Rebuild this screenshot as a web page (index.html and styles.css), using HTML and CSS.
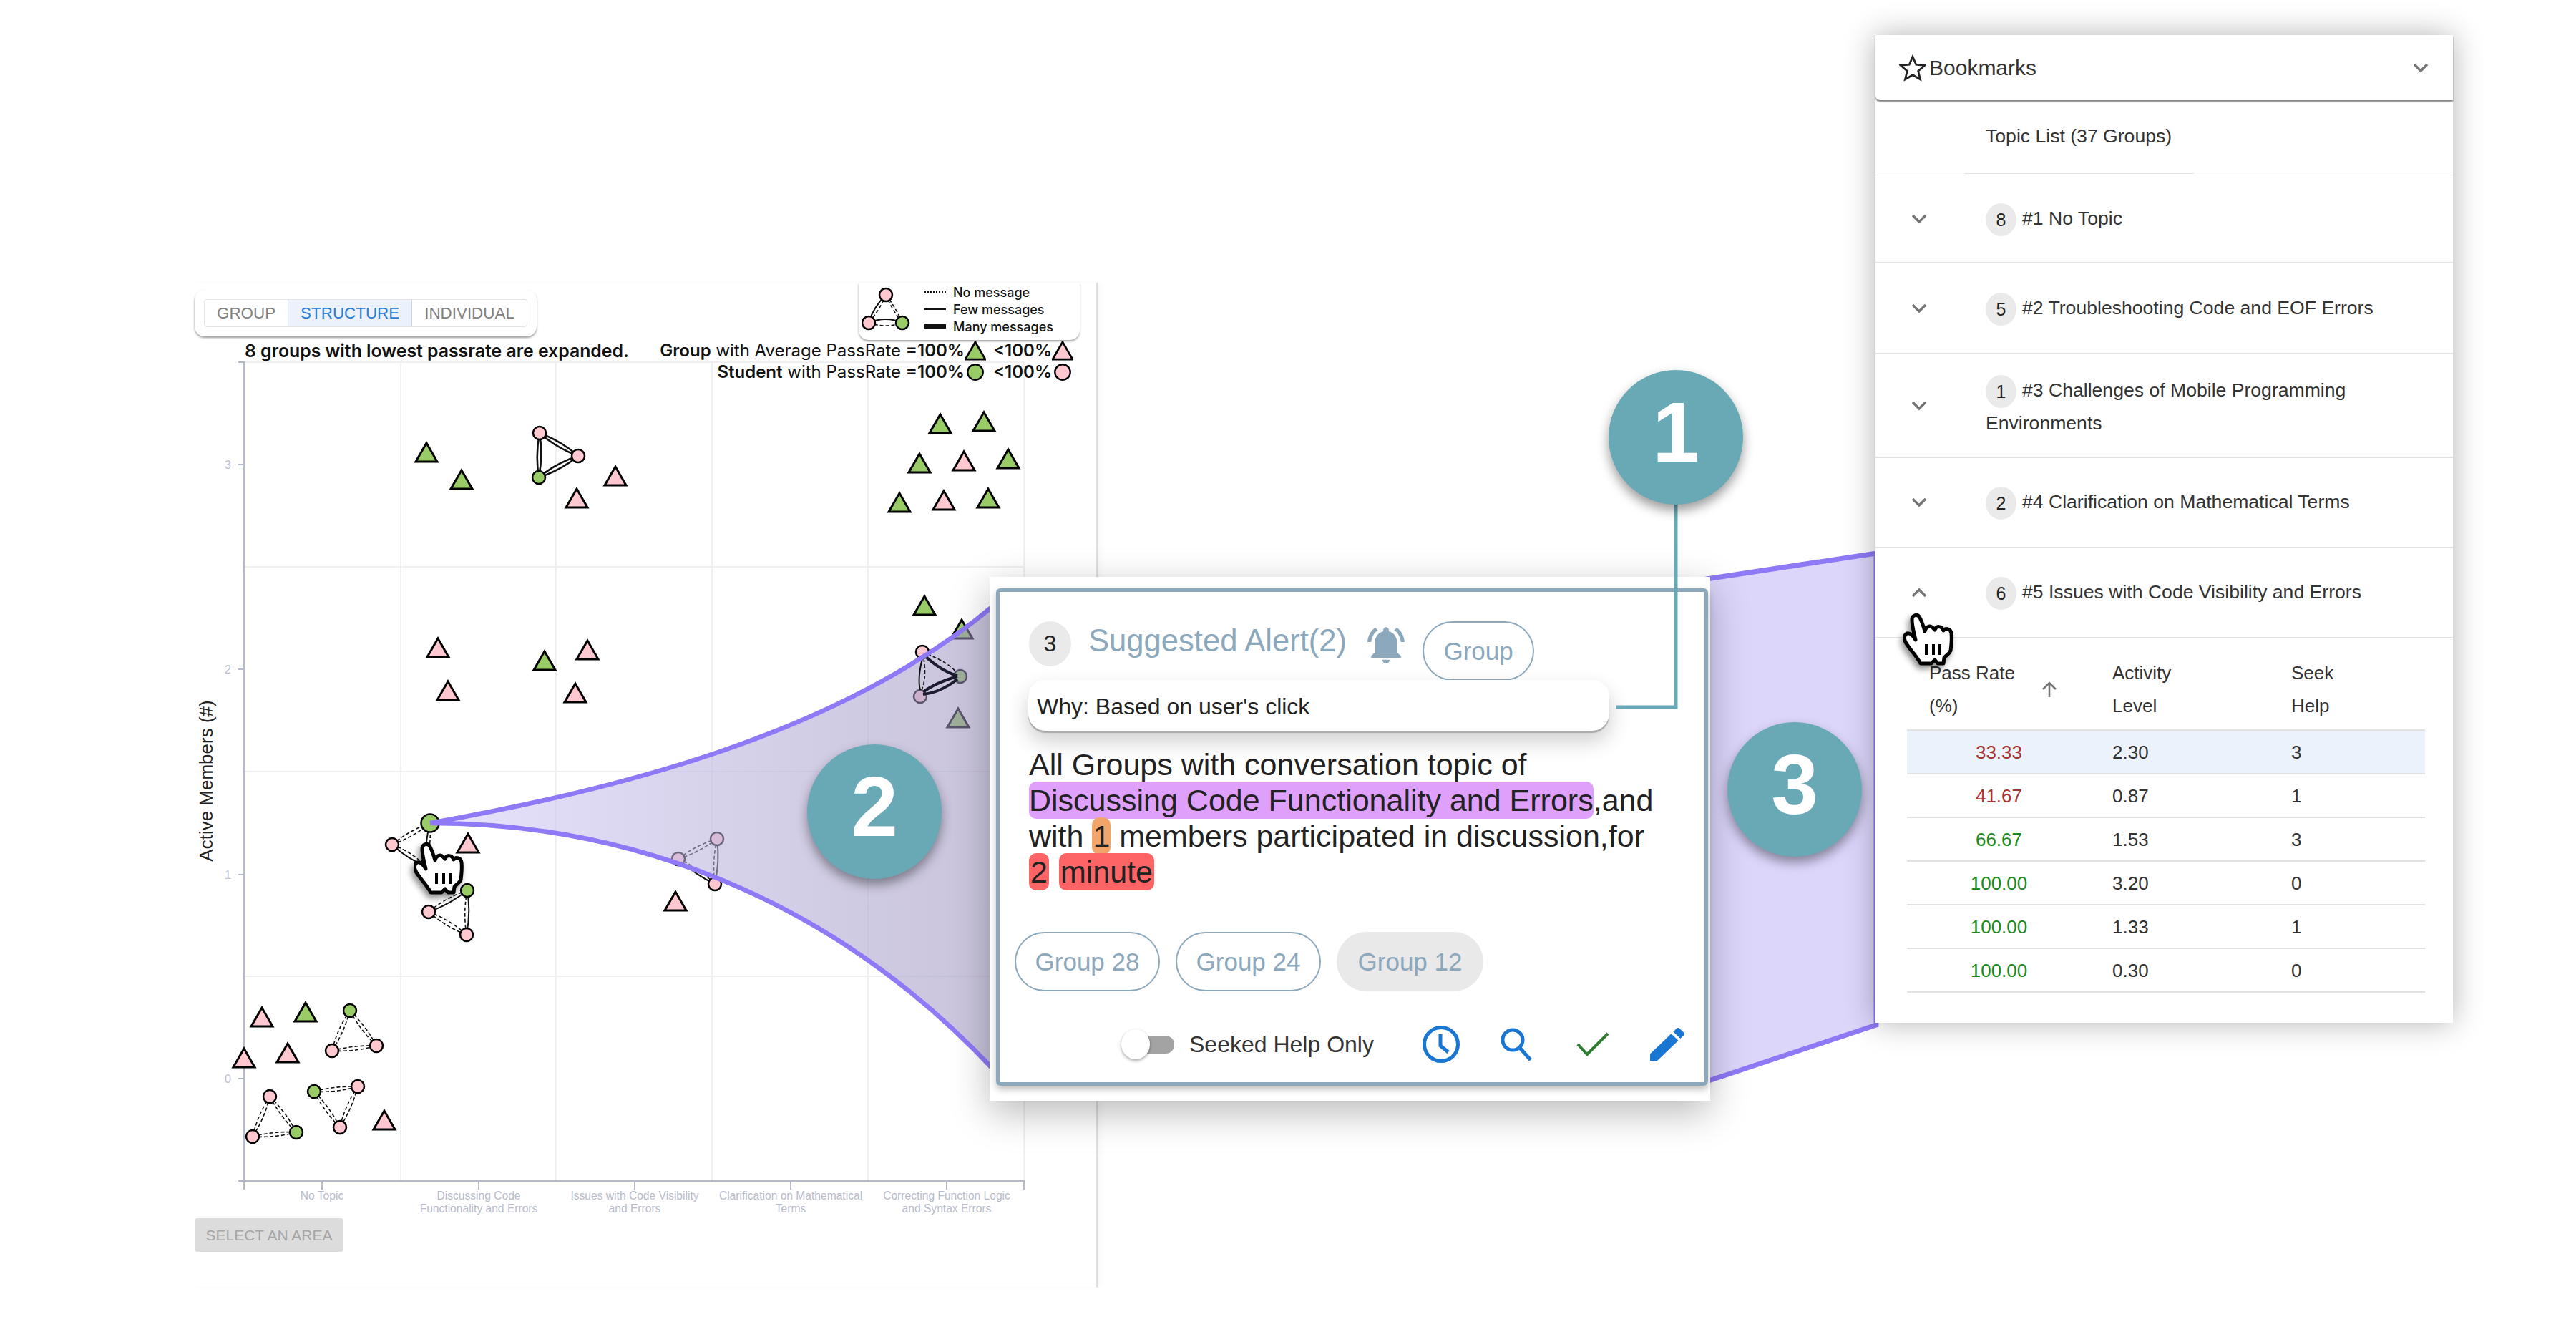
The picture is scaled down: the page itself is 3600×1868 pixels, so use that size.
FILE: index.html
```html
<!DOCTYPE html>
<html lang="en">
  <head>
    <meta charset="utf-8" />
    <title>Suggested alert walkthrough</title>
    <link rel="stylesheet" href="styles.css">
  </head>
  <body>
    <div class="stage">

      <!-- shapes used all over the chart -->
      <svg class="defs" width="0" height="0">
        <defs>
          <polygon id="tg" class="green tri" points="0,-13 15,13 -15,13" />
          <polygon id="tp" class="pink tri" points="0,-13 15,13 -15,13" />
          <circle id="ng" class="green" r="9" />
          <circle id="np" class="pink" r="9" />
          <symbol id="hand" viewBox="0 0 70 74">
            <path class="hand-body" d="M24 70 C20 62 12 54 4 42 C0 36 1 30 5 28 C9 27 13 30 17 37 C15 28 12 18 12 9 C12 2 20 0 23 6 C26 12 28 18 30 25 C31 19 37 16 41 20 L44 23 C46 17 53 17 56 24 C59 20 66 21 67 28 C68 36 67 44 66 52 C64 57 59 59 57 62 L56 70 L48 70 L44 65 L39 70 Z" />
            <path class="hand-lines" d="M32 43V58M42 43V58M51 43V58" />
          </symbol>
        </defs>
      </svg>

      <!-- the scatter chart, in page coordinates -->
      <svg class="canvas" viewBox="0 0 3600 1868">
        <g class="grid">
          <path d="M560 506V1650M777 506V1650M995 506V1650M1213 506V1650M1431 506V1650" />
          <path d="M341 506H1431M341 792H1431M341 1078H1431M341 1364H1431" />
        </g>
        <g class="axis">
          <path d="M333 506H341V1650M333 649H341M333 935H341M333 1222H341M333 1507H341" />
          <path d="M333 1650H1431V1662M341 1650V1662M450 1650V1662M669 1650V1662M887 1650V1662M1105 1650V1662M1323 1650V1662" />
        </g>
        <g class="tick-y">
          <text x="323" y="655">3</text>
          <text x="323" y="941">2</text>
          <text x="323" y="1228">1</text>
          <text x="323" y="1513">0</text>
        </g>
        <g class="tick-x">
          <text x="450" y="1676">No Topic</text>
          <text x="669" y="1676">Discussing Code</text>
          <text x="669" y="1694">Functionality and Errors</text>
          <text x="887" y="1676">Issues with Code Visibility</text>
          <text x="887" y="1694">and Errors</text>
          <text x="1105" y="1676">Clarification on Mathematical</text>
          <text x="1105" y="1694">Terms</text>
          <text x="1323" y="1676">Correcting Function Logic</text>
          <text x="1323" y="1694">and Syntax Errors</text>
        </g>
        <text class="y-title" transform="translate(297 1091) rotate(-90)">Active Members (#)</text>

        <g class="edges">
          <!-- group at top middle -->
          <path class="solid bold" d="M754 605q30 11 54 32M754 605q24 21 54 32M808 637q-24 20 -55 30M808 637q-31 10 -55 30M754 605q5 31 -1 62M754 605q-6 31 -1 62" />
          <!-- clicked group -->
          <path class="dash" d="M601 1150q-24 20 -53 30M601 1150q-29 10 -53 30M548 1180q27 10 47 30M601 1150q2 30 -6 60" />
          <path class="solid" d="M548 1180q21 20 47 30M601 1150q-8 30 -6 60" />
          <path class="solid" d="M653 1244q-25 20 -54 30M653 1244q5 31 -1 62" />
          <path class="dash" d="M653 1244q-30 10 -54 30M599 1274q24 21 53 32M599 1274q30 11 53 32M653 1244q-6 31 -1 62" />
          <!-- group cut by the fan edge -->
          <path class="dash" d="M1002 1172q-25 19 -54 28M1002 1172q-30 9 -54 28M948 1200q29 13 51 35M1002 1172q-7 32 -3 63" />
          <path class="solid" d="M948 1200q23 22 51 35M1002 1172q4 32 -3 63" />
          <!-- no topic groups -->
          <path class="dash" d="M489 1412q-8 30 -25 56M489 1412q-18 26 -25 56M464 1468q32 2 62 -7M464 1468q31 -8 62 -7M489 1412q23 22 37 49M489 1412q15 28 37 49" />
          <path class="dash" d="M377 1532q-7 30 -24 56M377 1532q-17 26 -24 56M353 1588q31 2 61 -6M353 1588q30 -8 61 -6M377 1532q23 22 37 50M377 1532q15 28 37 50" />
          <path class="dash" d="M439 1525q31 2 61 -7M439 1525q30 -8 61 -7M500 1518q-8 31 -25 57M500 1518q-18 27 -25 57M439 1525q22 22 36 50M439 1525q14 28 36 50" />
        </g>

        <g class="nodes">
          <use href="#tg" x="596" y="632" /><use href="#tg" x="645" y="670" />
          <use href="#tp" x="860" y="665" /><use href="#tp" x="806" y="696" />
          <use href="#tg" x="1314" y="592" /><use href="#tg" x="1375" y="589" />
          <use href="#tg" x="1285" y="647" /><use href="#tp" x="1347" y="644" />
          <use href="#tg" x="1409" y="641" /><use href="#tg" x="1257" y="702" />
          <use href="#tp" x="1319" y="699" /><use href="#tg" x="1381" y="696" />
          <use href="#tp" x="612" y="905" /><use href="#tp" x="626" y="965" />
          <use href="#tg" x="761" y="923" /><use href="#tp" x="821" y="908" />
          <use href="#tp" x="804" y="968" /><use href="#tg" x="1292" y="846" />
          <use href="#tg" x="1344" y="879" /><use href="#tg" x="1339" y="1003" />
          <use href="#tp" x="654" y="1178" /><use href="#tp" x="944" y="1259" />
          <use href="#tp" x="366" y="1421" /><use href="#tg" x="427" y="1414" />
          <use href="#tp" x="341" y="1478" /><use href="#tp" x="402" y="1471" />
          <use href="#tp" x="537" y="1565" />

          <use href="#np" x="754" y="605" /><use href="#np" x="808" y="637" /><use href="#ng" x="753" y="667" />
          <use href="#np" x="1289" y="911" /><use href="#ng" x="1342" y="945" /><use href="#np" x="1286" y="973" />
          <use href="#np" x="548" y="1180" /><use href="#np" x="595" y="1210" />
          <circle class="green" cx="601" cy="1150" r="12.5" />
          <use href="#ng" x="653" y="1244" /><use href="#np" x="599" y="1274" /><use href="#np" x="652" y="1306" />
          <use href="#np" x="1002" y="1172" /><use href="#np" x="948" y="1200" /><use href="#np" x="999" y="1235" />
          <use href="#ng" x="489" y="1412" /><use href="#np" x="464" y="1468" /><use href="#np" x="526" y="1461" />
          <use href="#np" x="377" y="1532" /><use href="#np" x="353" y="1588" /><use href="#ng" x="414" y="1582" />
          <use href="#ng" x="439" y="1525" /><use href="#np" x="500" y="1518" /><use href="#np" x="475" y="1575" />
        </g>
      </svg>

      <section class="chart-panel">
        <div class="chart-top">
          <div class="tabs-card">
            <div class="tabs">
              <span class="tab">GROUP</span>
              <span class="tab tab-active">STRUCTURE</span>
              <span class="tab">INDIVIDUAL</span>
            </div>
          </div>
          <div class="legend">
            <svg class="legend-graph" viewBox="1205 400 70 70">
              <g class="edges">
                <path class="solid" d="M1238 416q-18 18 -24 39M1214 455q24 -10 47 0" />
                <path class="dash" d="M1238 416q-8 20 -24 39M1238 416q8 20 23 39M1238 416q14 18 23 39M1214 455q24 8 47 0" />
              </g>
              <circle class="pink" cx="1238" cy="416" r="9" />
              <circle class="pink" cx="1214" cy="455" r="9" />
              <circle class="green" cx="1261" cy="455" r="9" />
            </svg>
            <ul class="legend-list">
              <li><i class="sample sample-none"></i>No message</li>
              <li><i class="sample sample-few"></i>Few messages</li>
              <li><i class="sample sample-many"></i>Many messages</li>
            </ul>
          </div>
        </div>
        <div class="captions">
          <p class="caption-left">8 groups with lowest passrate are expanded.</p>
          <div class="caption-right">
            <p><b>Group</b> with Average PassRate <b>=100%</b><svg class="key" viewBox="-16 -15 32 30"><use href="#tg" /></svg><b class="key-gap">&lt;100%</b><svg class="key" viewBox="-16 -15 32 30"><use href="#tp" /></svg></p>
            <p><b>Student</b> with PassRate <b>=100%</b><svg class="key" viewBox="-16 -15 32 30"><circle class="green" r="11.5" /></svg><b class="key-gap">&lt;100%</b><svg class="key" viewBox="-16 -15 32 30"><circle class="pink" r="11.5" /></svg></p>
          </div>
        </div>
        <button class="select-btn">SELECT AN AREA</button>
      </section>

      <!-- the two fans joining the views -->
      <svg class="canvas" viewBox="0 0 3600 1868">
        <defs>
          <linearGradient id="fanFill" x1="0" x2="1" y1="0" y2="0">
            <stop offset="0" stop-color="#d8d0fa" stop-opacity="0.6" />
            <stop offset="1" stop-color="#9d94c0" stop-opacity="0.55" />
          </linearGradient>
        </defs>
        <path class="fan" d="M601 1150C850 1105 1170 1030 1390 845V1496C1150 1240 860 1150 601 1150Z" />
        <!-- this group stays dark under the fan -->
        <g class="edges">
          <path class="heavy" d="M1292 916q24 22 46 28M1338 949q-25 19 -48 21M1338 945q-31 9 -48 22" />
          <path class="solid" d="M1289 920q-7 28 -3 44" />
          <path class="dash" d="M1296 914q30 12 40 25M1291 920q4 28 -3 44" />
        </g>
        <path class="fan-edge" d="M601 1150C850 1105 1170 1030 1390 845M601 1150C860 1150 1150 1240 1390 1496" />
        <path class="fan-right" d="M2385 809L2622 773V1432L2385 1511Z" />
      </svg>

      <section class="alert-popup">
        <div class="alert-box">
          <div class="alert-head">
            <span class="count">3</span>
            <h2 class="alert-title">Suggested Alert(2)</h2>
            <svg class="bell" viewBox="2 2 20 20"><path d="M7.58 4.08 6.15 2.65C3.75 4.48 2.17 7.3 2.03 10.5h2c.15-2.65 1.51-4.97 3.55-6.42zm12.39 6.42h2c-.15-3.2-1.73-6.02-4.12-7.85l-1.42 1.43c2.02 1.45 3.39 3.77 3.54 6.42zM18 11c0-3.07-1.64-5.64-4.5-6.32V4c0-.83-.67-1.5-1.5-1.5s-1.5.67-1.5 1.5v.68C7.63 5.36 6 7.92 6 11v5l-2 2v1h16v-1l-2-2v-5zm-6 11c.14 0 .27-.01.4-.04.65-.14 1.18-.58 1.44-1.18.1-.24.15-.5.15-.78h-4c.01 1.1.9 2 2.01 2z" /></svg>
            <span class="chip chip-small">Group</span>
          </div>
          <div class="why">Why: Based on user's click</div>
          <p class="alert-text">All Groups with conversation topic of <mark class="hl-topic">Discussing Code Functionality and Errors</mark>,and with <mark class="hl-count">1</mark> members participated in discussion,for <mark class="hl-time">2</mark> <mark class="hl-time">minute</mark></p>
          <div class="chips">
            <span class="chip">Group 28</span>
            <span class="chip">Group 24</span>
            <span class="chip chip-on">Group 12</span>
          </div>
          <div class="alert-foot">
            <span class="toggle"><i class="knob"></i></span>
            <span class="toggle-label">Seeked Help Only</span>
            <svg class="ico ico-clock" viewBox="0 0 52 52"><circle cx="26" cy="26" r="23.5" /><path d="M25 12V28L36 37" /></svg>
            <svg class="ico ico-search" viewBox="0 0 44 46"><circle cx="17" cy="17" r="14" /><path d="M27 28L42 45" /></svg>
            <svg class="ico ico-check" viewBox="0 0 46 34"><path d="M2 17L15 31L44 2" /></svg>
            <svg class="ico ico-pen" viewBox="3 3 18 18" preserveAspectRatio="none"><path d="M3 17.25V21h3.75L17.81 9.94l-3.75-3.75L3 17.25zM20.71 7.04c.39-.39.39-1.02 0-1.41l-2.34-2.34c-.39-.39-1.02-.39-1.41 0l-1.83 1.83 3.75 3.75 1.83-1.83z" /></svg>
          </div>
        </div>
      </section>

      <section class="bookmarks">
        <header class="bm-head">
          <svg class="star" viewBox="0 0 36 36"><path d="M18 3L22.5 13.5L34 14.5L25.3 22L28 33L18 27.2L8 33L10.7 22L2 14.5L13.5 13.5Z" /></svg>
          <span class="bm-title">Bookmarks</span>
          <svg class="chev chev-head" viewBox="0 0 22 14"><path d="M2 2L11 11L20 2" /></svg>
        </header>
        <div class="topic-head"><span>Topic List (37 Groups)</span></div>
        <div class="topic-list">
          <div class="topic-row">
            <svg class="chev" viewBox="0 0 22 14"><path d="M2 2L11 11L20 2" /></svg>
            <div class="topic-text"><span class="count count-sm">8</span>#1 No Topic</div>
          </div>
          <div class="topic-row">
            <svg class="chev" viewBox="0 0 22 14"><path d="M2 2L11 11L20 2" /></svg>
            <div class="topic-text"><span class="count count-sm">5</span>#2 Troubleshooting Code and EOF Errors</div>
          </div>
          <div class="topic-row">
            <svg class="chev" viewBox="0 0 22 14"><path d="M2 2L11 11L20 2" /></svg>
            <div class="topic-text"><span class="count count-sm">1</span>#3 Challenges of Mobile Programming Environments</div>
          </div>
          <div class="topic-row">
            <svg class="chev" viewBox="0 0 22 14"><path d="M2 2L11 11L20 2" /></svg>
            <div class="topic-text"><span class="count count-sm">2</span>#4 Clarification on Mathematical Terms</div>
          </div>
          <div class="topic-row">
            <svg class="chev" viewBox="0 0 22 14"><path d="M2 12L11 3L20 12" /></svg>
            <div class="topic-text"><span class="count count-sm">6</span>#5 Issues with Code Visibility and Errors</div>
          </div>
        </div>
        <table class="rates">
          <thead>
            <tr>
              <th>
                <div class="sort-head">
                  <span>Pass Rate<br>(%)</span>
                  <svg class="sort-arrow" viewBox="0 0 24 24"><path d="M12 23V3M3 12L12 3L21 12" /></svg>
                </div>
              </th>
              <th>Activity<br>Level</th>
              <th>Seek<br>Help</th>
            </tr>
          </thead>
          <tbody>
            <tr class="row-on"><td class="low">33.33</td><td>2.30</td><td>3</td></tr>
            <tr><td class="low">41.67</td><td>0.87</td><td>1</td></tr>
            <tr><td class="high">66.67</td><td>1.53</td><td>3</td></tr>
            <tr><td class="high">100.00</td><td>3.20</td><td>0</td></tr>
            <tr><td class="high">100.00</td><td>1.33</td><td>1</td></tr>
            <tr><td class="high">100.00</td><td>0.30</td><td>0</td></tr>
          </tbody>
        </table>
      </section>

      <!-- step markers and cursors sit over everything -->
      <svg class="canvas" viewBox="0 0 3600 1868">
        <path class="connector" d="M2342 600V988H2258" />
      </svg>
      <div class="step step-1">1</div>
      <div class="step step-2">2</div>
      <div class="step step-3">3</div>
      <svg class="cursor cursor-chart"><use href="#hand" /></svg>
      <svg class="cursor cursor-list"><use href="#hand" /></svg>
    </div>
  </body>
</html>
```

FILE: styles.css
```css
* {
  box-sizing: border-box;
}

body {
  margin: 0;
  background: #fff;
  font-family: "Liberation Sans", Arial, sans-serif;
}

p,
h2,
ul {
  margin: 0;
  padding: 0;
}

.stage {
  position: relative;
  width: 3600px;
  height: 1868px;
  overflow: hidden;
}

.defs {
  position: absolute;
}

.canvas {
  position: absolute;
  left: 0;
  top: 0;
  width: 3600px;
  height: 1868px;
  pointer-events: none;
}

/* chart marks */
.green {
  fill: #99cc66;
  stroke: #000;
  stroke-width: 2.5;
}

.pink {
  fill: #ffc8d0;
  stroke: #000;
  stroke-width: 2.5;
}

.tri {
  stroke-width: 3;
}

.grid path {
  fill: none;
  stroke: #f0f0f2;
  stroke-width: 2;
}

.axis path {
  fill: none;
  stroke: #b4b9cc;
  stroke-width: 2;
}

.tick-y text {
  font-size: 16px;
  fill: #bcc1d2;
  text-anchor: end;
}

.tick-x text {
  font-size: 15.6px;
  fill: #b8bccb;
  text-anchor: middle;
}

.y-title {
  font-size: 26px;
  fill: #222;
  text-anchor: middle;
}

.edges path {
  fill: none;
  stroke: #111;
}

.edges .solid {
  stroke-width: 2;
}

.edges .bold {
  stroke-width: 2.6;
}

.edges .dash {
  stroke-width: 1.6;
  stroke-dasharray: 5 3;
}

.edges .heavy {
  stroke-width: 4;
  stroke: #1c1c30;
}

/* left view */
.chart-panel {
  position: absolute;
  left: 272px;
  top: 395px;
  width: 1262px;
  height: 1403px;
  display: flex;
  flex-direction: column;
  border-right: 2px solid #dedede;
  box-shadow: 4px 0 8px rgba(0, 0, 0, 0.03);
}

.chart-top {
  display: flex;
  justify-content: space-between;
  align-items: flex-start;
  padding-right: 23px;
  height: 80px;
}

.tabs-card {
  margin-top: 10px;
  padding: 13px;
  background: #fff;
  border-radius: 14px;
  box-shadow: 0 2px 3px rgba(0, 0, 0, 0.4);
}

.tabs {
  display: flex;
  border: 1px solid #e4e4e4;
  border-radius: 4px;
  height: 39px;
}

.tab {
  display: flex;
  align-items: center;
  padding: 0 17px;
  font-size: 22.4px;
  color: #808080;
}

.tab-active {
  background: #ebf2fb;
  color: #2a7bd6;
  border-left: 1px solid #c8d4e4;
  border-right: 1px solid #c8d4e4;
}

.legend {
  display: flex;
  gap: 17px;
  width: 309px;
  height: 80px;
  padding: 1px 0 0 5px;
  background: #fff;
  border-radius: 0 0 14px 14px;
  box-shadow: 0 2px 3px rgba(0, 0, 0, 0.35);
}

.legend-graph {
  width: 70px;
  height: 70px;
  flex: none;
}

.legend-list {
  list-style: none;
  font-family: Inter, sans-serif;
  font-size: 18px;
  font-weight: 500;
  color: #111;
}

.legend-list li {
  display: flex;
  align-items: center;
  height: 24px;
}

.sample {
  width: 30px;
  margin-right: 10px;
  border-top: 2px solid #111;
}

.sample-none {
  border-top-style: dotted;
}

.sample-many {
  border-top-width: 6px;
}

.captions {
  display: flex;
  justify-content: space-between;
  padding: 0 32px 0 70px;
  font-family: Inter, sans-serif;
  font-size: 24px;
  line-height: 30px;
  color: #111;
  position: relative;
}

.caption-left {
  font-size: 24.8px;
  font-weight: 600;
}

.caption-right p {
  display: flex;
  justify-content: flex-end;
  align-items: center;
  white-space: pre;
}

.caption-right b {
  font-weight: 600;
}

.key {
  width: 30px;
  height: 28px;
}

.key-gap {
  margin-left: 10px;
}

.select-btn {
  margin-top: auto;
  margin-bottom: 49px;
  width: 208px;
  height: 47px;
  border: 0;
  border-radius: 4px;
  background: #dcdcdc;
  color: #a6a6a6;
  font-family: inherit;
  font-size: 21px;
  position: relative;
}

/* fans */
.fan {
  fill: url(#fanFill);
}

.fan-edge {
  fill: none;
  stroke: #8f79f7;
  stroke-width: 6.5;
}

.fan-right {
  fill: #dcd6fb;
  stroke: #8f79f7;
  stroke-width: 7;
}

/* alert popup */
.alert-popup {
  position: absolute;
  left: 1383px;
  top: 806px;
  width: 1007px;
  height: 732px;
  padding: 16px 3px 21px 9px;
  background: #fff;
  box-shadow: 0 16px 50px rgba(0, 0, 0, 0.28);
}

.alert-box {
  height: 100%;
  padding: 41px 0 0 41px;
  border: 5px solid #8ca8bc;
  border-radius: 6px;
  box-shadow: 0 5px 10px rgba(0, 0, 0, 0.25);
}

.alert-head {
  display: flex;
  align-items: flex-start;
}

.count {
  display: flex;
  flex: none;
  justify-content: center;
  align-items: center;
  width: 59px;
  height: 63px;
  border-radius: 50%;
  background: #eaeaea;
  color: #222;
  font-size: 32px;
}

.alert-title {
  margin: 4px 0 0 24px;
  font-size: 43.6px;
  font-weight: 400;
  line-height: 47px;
  color: #8ca8bc;
}

.bell {
  flex: none;
  width: 54px;
  height: 52px;
  margin: 7px 24px 0 28px;
  fill: #8ca8bc;
}

.chip {
  display: flex;
  flex: none;
  justify-content: center;
  align-items: center;
  width: 203px;
  height: 83px;
  border: 2px solid #8ca8bc;
  border-radius: 42px;
  color: #8ca8bc;
  font-size: 35px;
}

.chip-small {
  width: 156px;
}

.chip-on {
  width: 205px;
  border-color: #e9e9e9;
  background: #e9e9e9;
}

.why {
  width: 812px;
  height: 71px;
  margin: -1px 0 0 -1px;
  padding-left: 12px;
  position: relative;
  line-height: 75px;
  font-size: 32px;
  color: #222;
  background: #fff;
  border-radius: 24px;
  box-shadow: 0 3px 1px #aaa, 0 14px 30px rgba(0, 0, 0, 0.2);
}

.alert-text {
  width: 880px;
  margin-top: 22px;
  font-size: 43px;
  line-height: 50px;
  color: #222;
}

mark {
  padding: 2px 0;
  border-radius: 10px;
  color: inherit;
  white-space: nowrap;
}

.hl-topic {
  background: #dea0fb;
}

.hl-count {
  padding: 2px 1px;
  background: #f2a56a;
}

.hl-time {
  padding: 2px 2px;
  margin-right: 2px;
  background: #fd6466;
}

.chips {
  display: flex;
  gap: 22px;
  margin: 59px 0 0 -20px;
}

.alert-foot {
  display: flex;
  align-items: center;
  margin: 53px 0 0 129px;
  height: 42px;
}

.toggle {
  position: relative;
  display: block;
  flex: none;
  width: 66px;
  height: 25px;
  margin-left: 8px;
  border-radius: 12px;
  background: #a3a3a3;
}

.knob {
  position: absolute;
  left: -8px;
  top: -9px;
  width: 40px;
  height: 42px;
  border-radius: 50%;
  background: #fff;
  box-shadow: 0 2px 4px rgba(0, 0, 0, 0.35);
}

.toggle-label {
  flex: none;
  margin: 0 68px 0 21px;
  width: 258px;
  font-size: 32px;
  white-space: nowrap;
  color: #333;
}

.ico {
  flex: none;
  fill: none;
  stroke: #1976d2;
}

.ico-clock {
  width: 52px;
  height: 52px;
  stroke-width: 5;
}

.ico-search {
  width: 44px;
  height: 46px;
  margin-left: 57px;
  stroke-width: 5;
}

.ico-check {
  width: 46px;
  height: 34px;
  margin-left: 62px;
  stroke: #2e7d32;
  stroke-width: 4;
}

.ico-pen {
  width: 48px;
  height: 46px;
  margin-left: 57px;
  stroke: none;
  fill: #1976d2;
}

/* bookmarks panel */
.bookmarks {
  position: absolute;
  left: 2620px;
  top: 49px;
  width: 808px;
  height: 1380px;
  background: #fff;
  border-left: 1px solid #888;
  box-shadow: 0 0 40px rgba(0, 0, 0, 0.3);
  color: #333;
  font-size: 26.6px;
}

.bm-head {
  display: flex;
  align-items: center;
  height: 91px;
  padding: 0 34px 0 33px;
  border-radius: 0 0 0 6px;
  box-shadow: 0 2px 2px rgba(0, 0, 0, 0.5);
  position: relative;
}

.star {
  width: 38px;
  height: 38px;
  margin-right: 4px;
  fill: none;
  stroke: #222;
  stroke-width: 2.6;
}

.bm-title {
  flex: 1;
  font-size: 30px;
}

.chev {
  width: 22px;
  height: 14px;
  margin-left: 50px;
  flex: none;
  fill: none;
  stroke: #757575;
  stroke-width: 3.4;
}

.chev-head {
  margin: 0;
}

.topic-head {
  height: 105px;
  padding-left: 154px;
  border-bottom: 1px solid #eee;
}

.topic-head span {
  display: block;
  width: 321px;
  height: 103px;
  margin-left: -30px;
  padding: 35px 0 0 30px;
  border-bottom: 1px solid #e4e4e4;
}

.topic-list {
  display: grid;
  grid-template-rows: 123px 127px 145px 126px 125px;
}

.topic-row {
  display: flex;
  align-items: center;
  border-bottom: 2px solid #e2e2e2;
}

.topic-row:last-child {
  border-bottom-width: 1px;
}

.topic-text {
  width: 640px;
  margin-left: 82px;
  padding-top: 2px;
  line-height: 42px;
}

.count-sm {
  display: inline-flex;
  vertical-align: middle;
  width: 43px;
  height: 46px;
  margin-right: 8px;
  font-size: 25px;
}

.rates {
  width: 724px;
  margin-left: 44px;
  border-collapse: collapse;
  table-layout: fixed;
  font-size: 26px;
}

.rates th {
  padding: 26px 0 10px 16px;
  font-weight: 400;
  text-align: left;
  line-height: 46px;
  vertical-align: top;
  border-bottom: 2px solid #e2e2e2;
}

.rates th:first-child {
  width: 271px;
  padding-left: 31px;
}

.rates th:nth-child(2) {
  width: 250px;
}

.sort-head {
  display: flex;
  align-items: center;
}

.sort-arrow {
  width: 24px;
  height: 24px;
  margin-left: 36px;
  fill: none;
  stroke: #757575;
  stroke-width: 2.5;
}

.rates td {
  height: 61px;
  padding: 1px 0 0 16px;
  border-bottom: 2px solid #e2e2e2;
}

.rates td:first-child {
  padding: 1px 14px 0 0;
  text-align: center;
}

.row-on {
  background: #ebf2fb;
}

.low {
  color: #a83232;
}

.high {
  color: #1a8a1a;
}

/* numbered markers */
.connector {
  fill: none;
  stroke: #68a9b5;
  stroke-width: 5;
}

.step {
  position: absolute;
  width: 188px;
  height: 188px;
  padding-bottom: 14px;
  display: flex;
  justify-content: center;
  align-items: center;
  border-radius: 50%;
  background: #68a9b5;
  color: #fff;
  font-size: 118px;
  font-weight: 700;
  box-shadow: 0 8px 16px rgba(0, 0, 0, 0.4);
}

.step-1 {
  left: 2248px;
  top: 517px;
}

.step-2 {
  left: 1128px;
  top: 1040px;
}

.step-3 {
  left: 2414px;
  top: 1009px;
}

.cursor {
  position: absolute;
  width: 70px;
  height: 74px;
  overflow: visible;
  filter: drop-shadow(-3px 5px 4px rgba(0, 0, 0, 0.45));
}

.cursor-chart {
  left: 578px;
  top: 1177px;
}

.cursor-list {
  left: 2660px;
  top: 857px;
}

.hand-body {
  fill: #fff;
  stroke: #000;
  stroke-width: 5;
  stroke-linejoin: round;
}

.hand-lines {
  fill: none;
  stroke: #000;
  stroke-width: 4;
}
```
